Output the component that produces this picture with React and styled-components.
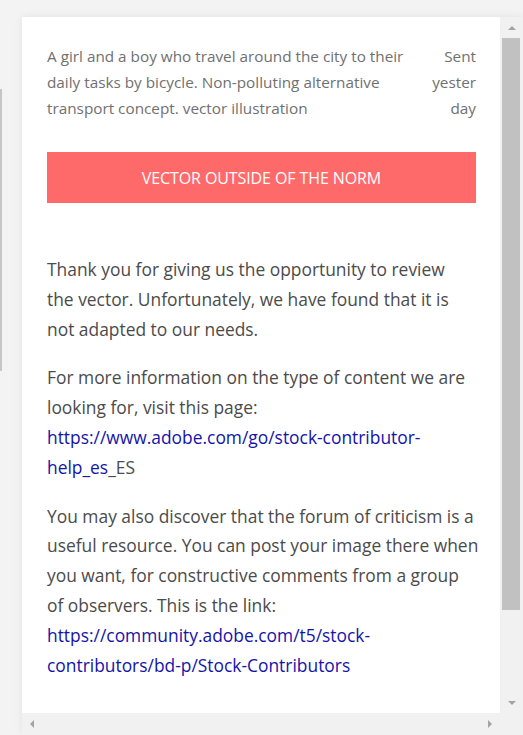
import React from 'react';
import styled, { createGlobalStyle, css } from 'styled-components';

const GlobalStyle = createGlobalStyle`
    html, body {
        margin: 0;
        padding: 0;
        background: #f3f3f3;
    }
    body {
        font-family: "Open Sans", "Noto Sans", Arial, sans-serif;
    }
`

const Page = styled.div`
    display: flex;
    align-items: flex-start;
    width: 523px;
    height: 735px;
    overflow: hidden;
`

const SideStrip = styled.div`
    width: 2px;
    height: 282px;
    margin-top: 89px;
    background: #c6c6c6;
    flex-shrink: 0;
`

const Panel = styled.div`
    margin-left: 20px;
    margin-top: 17px;
    display: grid;
    grid-template-columns: 478px 23px;
    grid-template-rows: 696px 22px;
    background: #fff;
    box-shadow: 0 0 8px rgba(0, 0, 0, 0.07);
`

const Viewport = styled.div`
    overflow: hidden;
`

const Content = styled.div`
    padding: 26px 24px 40px 25px;
`

const Header = styled.div`
    display: flex;
    justify-content: space-between;
    gap: 10px;
    font-size: 15.3px;
    line-height: 26px;
    color: #707070;
`

const Description = styled.p`
    margin: 0;
    flex: 1;
    white-space: nowrap;
`

const SentAt = styled.div`
    width: 46px;
    text-align: right;
    flex-shrink: 0;
`

const StatusButton = styled.button`
    display: flex;
    align-items: center;
    justify-content: center;
    width: 100%;
    height: 51px;
    margin: 31px 0 52px;
    border: none;
    background: #fe6a6a;
    color: #fff;
    font-family: inherit;
    font-size: 16px;
    letter-spacing: -0.1px;
    text-transform: uppercase;
`

const Paragraph = styled.p`
    margin: 0 0 19px;
    font-size: 17.4px;
    line-height: 29.8px;
    color: #4b4b4b;
    white-space: nowrap;
`

const Link = styled.a`
    color: #1414a8;
    text-decoration: none;
`

const ScrollTrack = styled.div`
    display: flex;
    flex-direction: ${p => (p.$vertical ? 'column' : 'row')};
    justify-content: space-between;
    background: #f1f1f1;
`

const ArrowBox = styled.div`
    display: flex;
    align-items: center;
    justify-content: center;
    flex-shrink: 0;
    width: ${p => (p.$vertical ? '23px' : '20px')};
    height: ${p => (p.$vertical ? '21px' : '22px')};
`

const triangles = {
    up: css`
        border-left: 4px solid transparent;
        border-right: 4px solid transparent;
        border-bottom: 4px solid #a3a3a3;
    `,
    down: css`
        border-left: 4px solid transparent;
        border-right: 4px solid transparent;
        border-top: 4px solid #a3a3a3;
    `,
    left: css`
        border-top: 4px solid transparent;
        border-bottom: 4px solid transparent;
        border-right: 4px solid #a3a3a3;
    `,
    right: css`
        border-top: 4px solid transparent;
        border-bottom: 4px solid transparent;
        border-left: 4px solid #a3a3a3;
    `,
}

const Triangle = styled.span`
    width: 0;
    height: 0;
    ${p => triangles[p.$dir]}
`

const Thumb = styled.div`
    height: 572px;
    margin: 0 3px 0 2px;
    background: #c1c1c1;
`

const Spacer = styled.div`
    flex: 1;
`

const Corner = styled.div`
    background: #f1f1f1;
`

function Arrow({ dir, vertical }) {
    return (
        <ArrowBox $vertical={vertical}>
            <Triangle $dir={dir} />
        </ArrowBox>
    )
}

export default function App() {
    return (
        <>
            <GlobalStyle />
            <Page>
                <SideStrip />
                <Panel>
                    <Viewport>
                        <Content>
                            <Header>
                                <Description>
                                    A girl and a boy who travel around the city to their<br />
                                    daily tasks by bicycle. Non-polluting alternative<br />
                                    transport concept. vector illustration
                                </Description>
                                <SentAt>Sent<br />yester<br />day</SentAt>
                            </Header>
                            <StatusButton>Vector outside of the norm</StatusButton>
                            <Paragraph>
                                Thank you for giving us the opportunity to review<br />
                                the vector. Unfortunately, we have found that it is<br />
                                not adapted to our needs.
                            </Paragraph>
                            <Paragraph>
                                For more information on the type of content we are<br />
                                looking for, visit this page:<br />
                                <Link href="#">https://www.adobe.com/go/stock-contributor-<br />help_es</Link>_ES
                            </Paragraph>
                            <Paragraph>
                                You may also discover that the forum of criticism is a<br />
                                useful resource. You can post your image there when<br />
                                you want, for constructive comments from a group<br />
                                of observers. This is the link:<br />
                                <Link href="#">https://community.adobe.com/t5/stock-<br />contributors/bd-p/Stock-Contributors</Link>
                            </Paragraph>
                        </Content>
                    </Viewport>
                    <ScrollTrack $vertical>
                        <Arrow dir="up" vertical />
                        <Thumb />
                        <Spacer />
                        <Arrow dir="down" vertical />
                    </ScrollTrack>
                    <ScrollTrack>
                        <Arrow dir="left" />
                        <Arrow dir="right" />
                    </ScrollTrack>
                    <Corner />
                </Panel>
            </Page>
        </>
    )
}
